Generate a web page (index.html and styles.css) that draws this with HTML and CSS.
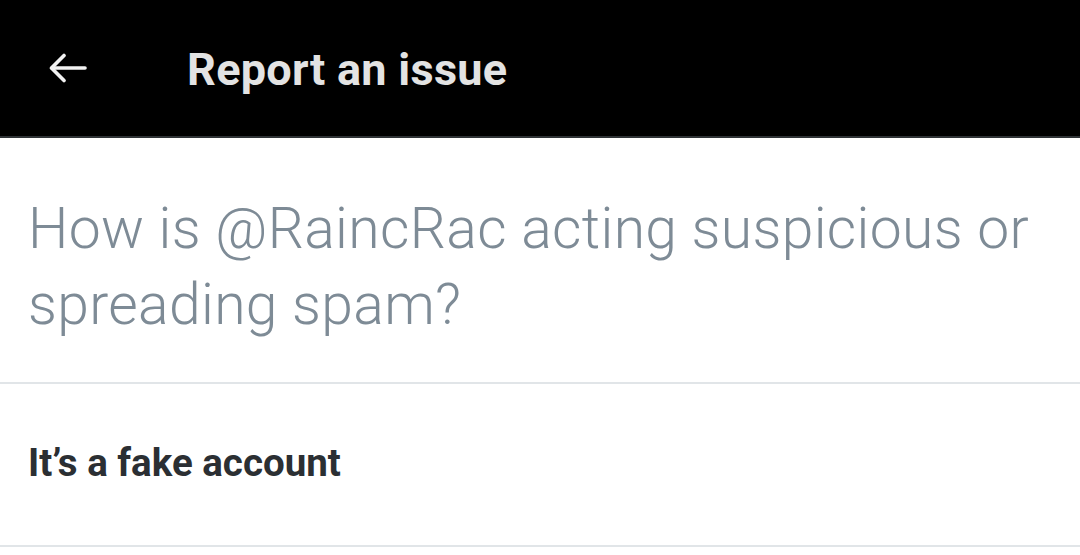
FILE: index.html
```html
<!DOCTYPE html>
<html lang="en">
<head>
<meta charset="utf-8">
<title>Report an issue</title>
<link rel="stylesheet" href="styles.css">
</head>
<body>
<header class="topbar">
  <button class="back" aria-label="Back">
    <svg width="38" height="30" viewBox="0 0 38 30" fill="none" stroke="#f2f2f2" stroke-width="3.6" stroke-linecap="round" stroke-linejoin="round">
      <path d="M36 15H3"/>
      <path d="M15 2.5L2.5 15L15 27.5"/>
    </svg>
  </button>
  <h1 class="title">Report an issue</h1>
</header>
<main>
  <section class="question">
    <p>How is @RaincRac acting suspicious or spreading spam?</p>
  </section>
  <ul class="options">
    <li class="option">It’s a fake account</li>
  </ul>
</main>
</body>
</html>
```
FILE: styles.css
```css
* { box-sizing: border-box; }
html, body {
  margin: 0;
  padding: 0;
  background: #ffffff;
  font-family: Roboto, "Noto Sans", "Liberation Sans", sans-serif;
}
.topbar {
  height: 138px;
  background: #000000;
  border-bottom: 2px solid #2f3336;
  display: flex;
  align-items: center;
}
.back {
  background: none;
  border: 0;
  padding: 0;
  margin-left: 49px;
  width: 38px;
  height: 30px;
  display: flex;
  align-items: center;
  justify-content: center;
}
.title {
  margin: 0 0 0 100px;
  padding-top: 3px;
  font-size: 45px;
  font-weight: 700;
  letter-spacing: 0.3px;
  color: #e3e3e3;
}
.question {
  padding: 53px 28px 39px 28px;
  border-bottom: 2px solid #e1e5e8;
}
.question p {
  margin: 0;
  font-size: 57px;
  font-weight: 300;
  line-height: 76px;
  letter-spacing: 0.35px;
  color: #7e8b96;
}
.options {
  list-style: none;
  margin: 0;
  padding: 0;
}
.option {
  padding: 55px 28px 58px 28px;
  font-size: 38.5px;
  line-height: 48px;
  font-weight: 700;
  color: #2b2f33;
  border-bottom: 2px solid #e1e5e8;
}
```
